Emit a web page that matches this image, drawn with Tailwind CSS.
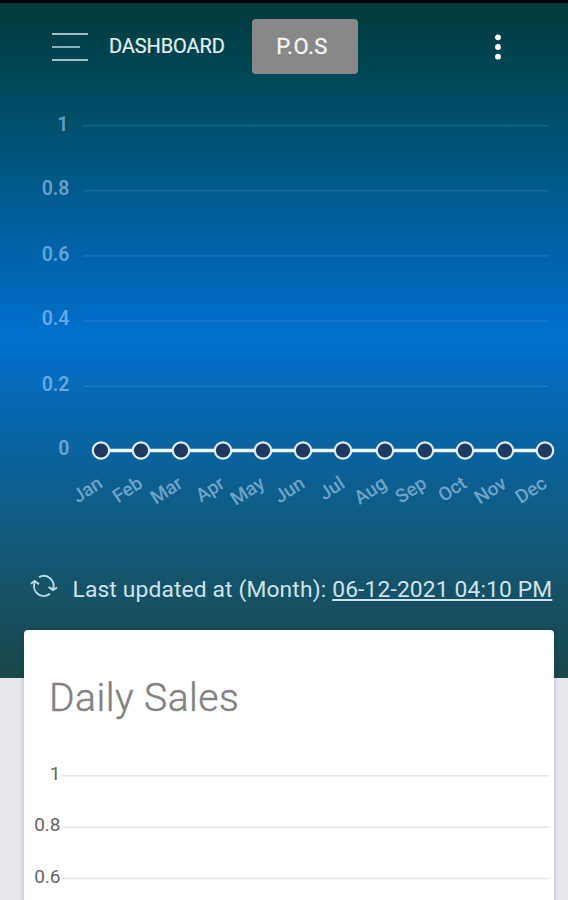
<!DOCTYPE html>
<html lang="en">
<head>
    <meta charset="UTF-8">
    <meta name="viewport" content="width=device-width, initial-scale=1.0">
    <title>Dashboard</title>
    <script src="https://cdn.jsdelivr.net/npm/@tailwindcss/browser@4"></script>
</head>
<body class="bg-[#e7e8ec] h-[900px] overflow-hidden font-['Roboto',sans-serif]">
    <!-- Header panel -->
    <section class="h-[678px] border-t-3 border-[#02030b] bg-linear-to-b from-[#033b3a] via-[#0070cf] via-49% to-[#194747]">
        <nav class="flex items-center h-[87px] pl-[51.5px] pr-[66px]">
            <button class="flex flex-col gap-[11px] w-9" aria-label="Menu">
                <span class="h-0.5 w-9 bg-[#a5bfc6]"></span>
                <span class="h-0.5 w-7 bg-[#8bb0b9]"></span>
                <span class="h-0.5 w-9 bg-[#a5bfc6]"></span>
            </button>
            <a href="#" class="ml-[21.5px] -mt-0.5 w-[143px] text-[20px] tracking-[-0.1px] text-[#e3f0f3] [-webkit-text-stroke:0.2px_#e3f0f3]">DASHBOARD</a>
            <a href="#" class="flex items-center justify-center w-[106px] h-[55px] pr-1.5 rounded-[4px] bg-[#888] text-[22px] tracking-[0.5px] text-[#f5f5f5] [-webkit-text-stroke:0.3px_#f5f5f5]">P.O.S</a>
            <button class="ml-auto text-white" aria-label="More">
                <svg class="w-2 h-7" viewBox="0 0 8 28" fill="currentColor">
                    <circle cx="4" cy="4.3" r="2.9" /><circle cx="4" cy="14" r="2.9" /><circle cx="4" cy="23.7" r="2.9" />
                </svg>
            </button>
        </nav>

        <!-- Monthly chart -->
        <svg class="block w-full h-[440px]" viewBox="0 90 568 440" font-family="Roboto, sans-serif">
            <g stroke="#8fc8ff" stroke-opacity=".15" stroke-width="1.7">
                <path d="M83 125.7H548M83 190.7H548M83 256H548M83 321H548M83 386.2H548" />
            </g>
            <g fill="#a7d0f3" fill-opacity=".62" font-size="19.5" font-weight="600" text-anchor="end">
                <text x="68.5" y="130.5">1</text>
                <text x="69.5" y="195">0.8</text>
                <text x="69.5" y="260.5">0.6</text>
                <text x="69.5" y="325">0.4</text>
                <text x="69.5" y="390.5">0.2</text>
                <text x="69.5" y="455">0</text>
            </g>
            <path d="M101 450.5H545" stroke="#eef6fc" stroke-width="3.4" />
            <g id="points" fill="#1f3963" stroke="#dcedf7" stroke-width="2.2"></g>
            <g id="months" fill="#8fbbdc" fill-opacity=".75" font-size="19" font-weight="500" text-anchor="end"></g>
        </svg>

        <div class="flex items-center h-[96px] pt-[34px] pb-[10px] pl-[30px]">
            <svg class="w-7 h-6 -mt-2 mr-[14.5px]" viewBox="0 0 28 24" fill="none" stroke="#b9dbe4" stroke-width="1.9">
                <path d="M9 3.2A9.8 9.8 0 0 1 23.3 14M20 19.8A9.8 9.8 0 0 1 4.6 9" />
                <path d="M1 9.8L4.6 7L9 10.2M18.6 13L22.8 16L27 13.6" />
                <path d="M3 9L4.6 6.5L7.5 9zM20.3 13.5L22.8 16.8L25.2 14z" fill="#b9dbe4" stroke="none" />
            </svg>
            <p class="text-[22.8px] leading-6 tracking-[0.14px] whitespace-nowrap text-[#cfe3ec]">Last updated at (Month): <a href="#" class="underline decoration-2 underline-offset-2">06-12-2021 04:10 PM</a></p>
        </div>
    </section>

    <!-- Daily sales card -->
    <section class="relative -mt-[48px] ml-6 w-[529.5px] h-[280px] rounded-t-[4px] bg-white shadow-[0_1px_5px_rgba(40,40,70,0.25)]">
        <h2 class="pt-[43px] pl-[25px] text-[39px] leading-[50px] font-light tracking-[0.5px] text-[#808080] [-webkit-text-stroke:0.5px_#8a8a8a]">Daily Sales</h2>
        <svg class="block w-full h-[177px]" viewBox="24 723 529.5 177" font-family="Roboto, sans-serif">
            <path d="M62 775.8H549M62 827.3H549M62 878.5H549" stroke="#e6e6e6" stroke-width="1.5" />
            <g fill="#666" font-size="19" text-anchor="end">
                <text x="60.5" y="780">1</text>
                <text x="60.5" y="831">0.8</text>
                <text x="60.5" y="882.5">0.6</text>
            </g>
        </svg>
    </section>

    <script>
        const months = [
            ['Jan', 101], ['Feb', 141], ['Mar', 181], ['Apr', 223], ['May', 263], ['Jun', 303],
            ['Jul', 343], ['Aug', 385], ['Sep', 425], ['Oct', 465], ['Nov', 505], ['Dec', 545]
        ];
        document.getElementById('points').innerHTML = months.map(([, x]) =>
            `<circle cx="${x}" cy="450.5" r="8.2" />`
        ).join('');
        document.getElementById('months').innerHTML = months.map(([name, x]) =>
            `<text transform="translate(${x + 3} 486.5) rotate(-33)">${name}</text>`
        ).join('');
    </script>
</body>
</html>
